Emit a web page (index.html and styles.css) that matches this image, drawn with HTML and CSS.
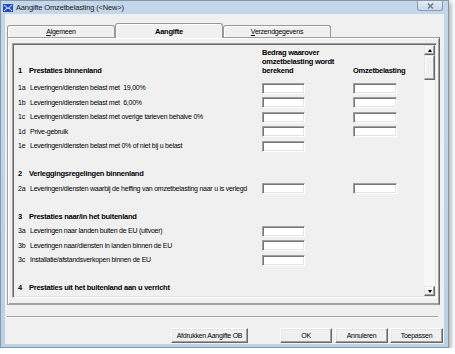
FILE: index.html
```html
<!DOCTYPE html>
<html>
  <head>
    <meta charset='UTF-8'>
    <title>Aangifte Omzetbelasting</title>
    <link rel="stylesheet" href="styles.css">
  </head>
  <body>
    <div class='window'>
      <div class='window__title'>
        <svg class='title__icon' width='10' height='8' viewBox='0 0 10 8'>
          <rect x='0' y='0' width='10' height='8' fill='#1f4fc4'/>
          <path d='M1 1 L5 4.5 L9 1 M1 7 L4 4 M9 7 L6 4' stroke='#fff' stroke-width='1' fill='none'/>
        </svg>
        <span class='title__text'>Aangifte Omzetbelasting (&lt;New&gt;)</span>
        <div class='title__close'>
          <svg width='7' height='6' viewBox='0 0 7 6'>
            <path d='M1 0.5 L6 5.5 M6 0.5 L1 5.5' stroke='#6f7f92' stroke-width='1.6'/>
          </svg>
        </div>
      </div>

      <div class='window__body'>
        <div class='tabs'>
          <div class='tabs__tab'><u>A</u>lgemeen</div>
          <div class='tabs__tab tabs__tab--active'>Aangifte</div>
          <div class='tabs__tab'><u>V</u>erzendgegevens</div>
        </div>

        <div class='tabs__panel'>
          <div class='panel__box'>
            <div class='box__form'>
              <div class='row row--head'>
                <span class='row__num'>1</span>
                <span class='row__label'>Prestaties binnenland</span>
                <span class='row__col'>Bedrag waarover<br>omzetbelasting wordt<br>berekend</span>
                <span class='row__col'>Omzetbelasting</span>
              </div>

              <div class='row row--first'>
                <span class='row__num'>1a</span>
                <span class='row__label'>Leveringen/diensten belast met&nbsp; 19,00%</span>
                <span class='row__col'><input class='field' type='text'></span>
                <span class='row__col'><input class='field field--wide' type='text'></span>
              </div>
              <div class='row'>
                <span class='row__num'>1b</span>
                <span class='row__label'>Leveringen/diensten belast met&nbsp; 6,00%</span>
                <span class='row__col'><input class='field' type='text'></span>
                <span class='row__col'><input class='field field--wide' type='text'></span>
              </div>
              <div class='row'>
                <span class='row__num'>1c</span>
                <span class='row__label'>Leveringen/diensten belast met overige tarieven behalve 0%</span>
                <span class='row__col'><input class='field' type='text'></span>
                <span class='row__col'><input class='field field--wide' type='text'></span>
              </div>
              <div class='row'>
                <span class='row__num'>1d</span>
                <span class='row__label'>Prive-gebruik</span>
                <span class='row__col'><input class='field' type='text'></span>
                <span class='row__col'><input class='field field--wide' type='text'></span>
              </div>
              <div class='row'>
                <span class='row__num'>1e</span>
                <span class='row__label'>Leveringen/diensten belast met 0% of niet bij u belast</span>
                <span class='row__col'><input class='field' type='text'></span>
                <span class='row__col'></span>
              </div>

              <div class='row row--section'>
                <span class='row__num'>2</span>
                <span class='row__label'>Verleggingsregelingen binnenland</span>
              </div>
              <div class='row'>
                <span class='row__num'>2a</span>
                <span class='row__label'>Leveringen/diensten waarbij de heffing van omzetbelasting naar u is verlegd</span>
                <span class='row__col'><input class='field' type='text'></span>
                <span class='row__col'><input class='field field--wide' type='text'></span>
              </div>

              <div class='row row--section'>
                <span class='row__num'>3</span>
                <span class='row__label'>Prestaties naar/in het buitenland</span>
              </div>
              <div class='row'>
                <span class='row__num'>3a</span>
                <span class='row__label'>Leveringen naar landen buiten de EU (uitvoer)</span>
                <span class='row__col'><input class='field' type='text'></span>
                <span class='row__col'></span>
              </div>
              <div class='row'>
                <span class='row__num'>3b</span>
                <span class='row__label'>Leveringen naar/diensten in landen binnen de EU</span>
                <span class='row__col'><input class='field' type='text'></span>
                <span class='row__col'></span>
              </div>
              <div class='row'>
                <span class='row__num'>3c</span>
                <span class='row__label'>Installatie/afstandsverkopen binnen de EU</span>
                <span class='row__col'><input class='field' type='text'></span>
                <span class='row__col'></span>
              </div>

              <div class='row row--section'>
                <span class='row__num'>4</span>
                <span class='row__label'>Prestaties uit het buitenland aan u verricht</span>
              </div>
            </div>

            <div class='box__scroll'>
              <div class='scroll__btn'><span class='scroll__arrow scroll__arrow--up'></span></div>
              <div class='scroll__thumb'></div>
              <div class='scroll__track'></div>
              <div class='scroll__btn'><span class='scroll__arrow scroll__arrow--down'></span></div>
            </div>
          </div>
        </div>

        <div class='window__sep'></div>

        <div class='window__buttons'>
          <div class='btn btn--print'>Afdrukken Aangifte OB</div>
          <div class='btn btn--ok'>OK</div>
          <div class='btn'>Annuleren</div>
          <div class='btn'>Toepassen</div>
        </div>
      </div>
    </div>
  </body>
</html>
```

FILE: styles.css
```css
html, body {
  margin: 0;
  background-color: #fff;
  font-family: 'Liberation Sans', Arial, sans-serif;
  font-size: 7px;
  letter-spacing: -0.25px;
  color: #000;
}

.window {
  display: flex;
  flex-direction: column;
  box-sizing: border-box;
  width: 449px;
  height: 348px;
  border: 1px solid #8797aa;
  background: linear-gradient(to bottom, #c4d6ea, #bcd0e6);
  box-shadow: 2px 2px 5px rgba(0, 0, 0, 0.35);
}

.window__title {
  display: flex;
  align-items: center;
  height: 13px;
  flex-shrink: 0;
}

.title__icon {
  margin-left: 2px;
}

.title__text {
  margin-left: 3px;
  font-size: 7.5px;
  letter-spacing: -0.15px;
  color: #1b1b1b;
}

.title__close {
  display: flex;
  align-items: center;
  justify-content: center;
  align-self: flex-start;
  box-sizing: border-box;
  width: 26px;
  height: 10px;
  margin-left: auto;
  margin-right: 5px;
  border: 1px solid #8a9bb1;
  border-top: none;
  border-radius: 0 0 3px 3px;
  background: linear-gradient(to bottom, #e4ecf5, #ccd9e7);
}

.window__body {
  display: flex;
  flex-direction: column;
  flex: 1;
  margin: 0 4px 3px 4px;
  padding: 9px 4px 1px 2px;
  background-color: #f0f0f0;
}

/* tabs */

.tabs {
  display: flex;
  align-items: flex-end;
  height: 14px;
  position: relative;
  z-index: 1;
}

.tabs__tab {
  box-sizing: border-box;
  width: 108px;
  height: 12px;
  border: 1px solid #989898;
  border-bottom: none;
  border-radius: 3px 3px 0 0;
  box-shadow: inset 1px 1px 0 #fff;
  background-color: #f0f0f0;
  text-align: center;
  line-height: 11px;
}

.tabs__tab--active {
  height: 15px;
  margin-bottom: -1px;
  font-size: 7.5px;
  font-weight: bold;
  line-height: 16px;
}

.tabs__panel {
  box-sizing: border-box;
  height: 268px;
  padding: 5px 2px 6px 4px;
  border: 1px solid #a0a0a0;
  border-right-color: #696969;
  box-shadow: inset 1px 1px 0 #fff, inset -1px -1px 0 #a0a0a0;
}

.panel__box {
  display: flex;
  box-sizing: border-box;
  height: 255px;
  border: 1px solid;
  border-color: #a0a0a0 #fff #fff #a0a0a0;
  box-shadow: inset 1px 1px 0 #696969, inset -1px -1px 0 #e3e3e3;
  padding: 1px;
}

.box__form {
  flex: 1;
  overflow: hidden;
  padding: 3px 0 0 4px;
}

/* form rows */

.row {
  display: grid;
  grid-template-columns: 12px 232px 91px 1fr;
  align-items: center;
  height: 14.5px;
  line-height: 14.5px;
  white-space: nowrap;
}

.row--head {
  align-items: end;
  height: auto;
  line-height: 9px;
  font-size: 7.5px;
  font-weight: bold;
}

.row--first {
  margin-top: 6px;
}

.row--section {
  margin-top: 13.5px;
  font-size: 7.5px;
  font-weight: bold;
}

.row--head .row__label,
.row--section .row__label {
  margin-left: -1px;
}

.row__col {
  display: flex;
  align-items: center;
}

.field {
  display: block;
  box-sizing: border-box;
  width: 43px;
  height: 11px;
  margin: 0;
  padding: 0;
  border: 1px solid;
  border-color: #a0a0a0 #fff #fff #a0a0a0;
  box-shadow: inset 1px 1px 0 #777, inset -1px -1px 0 #e3e3e3;
  background-color: #fff;
  outline: none;
}

.field--wide {
  width: 44px;
}

/* scrollbar */

.box__scroll {
  display: flex;
  flex-direction: column;
  width: 11px;
  background-color: #f7f7f7;
}

.scroll__btn,
.scroll__thumb {
  box-sizing: border-box;
  border: 1px solid;
  border-color: #e3e3e3 #696969 #696969 #e3e3e3;
  box-shadow: inset -1px -1px 0 #a0a0a0, inset 1px 1px 0 #fff;
  background-color: #f0f0f0;
}

.scroll__btn {
  display: flex;
  align-items: center;
  justify-content: center;
  height: 10px;
}

.scroll__thumb {
  height: 25px;
}

.scroll__track {
  flex: 1;
}

.scroll__arrow {
  width: 0;
  height: 0;
  border-left: 2.5px solid transparent;
  border-right: 2.5px solid transparent;
}

.scroll__arrow--up {
  border-bottom: 3px solid #000;
}

.scroll__arrow--down {
  border-top: 3px solid #000;
}

/* bottom */

.window__sep {
  height: 0;
  margin: 11px 2px 0 0;
  border-top: 1px solid #a0a0a0;
  border-bottom: 1px solid #fff;
}

.window__buttons {
  display: flex;
  justify-content: flex-end;
  gap: 2px;
  margin-top: 10px;
  margin-right: -3px;
}

.btn {
  box-sizing: border-box;
  width: 53px;
  height: 15px;
  border: 1px solid;
  border-color: #fff #696969 #696969 #fff;
  box-shadow: inset -1px -1px 0 #a0a0a0, inset 1px 1px 0 #e3e3e3;
  background-color: #f0f0f0;
  text-align: center;
  line-height: 13px;
}

.btn--print {
  width: 77px;
  margin-right: 30px;
}

.btn--ok {
  width: 52px;
  margin-right: 1px;
}
```
